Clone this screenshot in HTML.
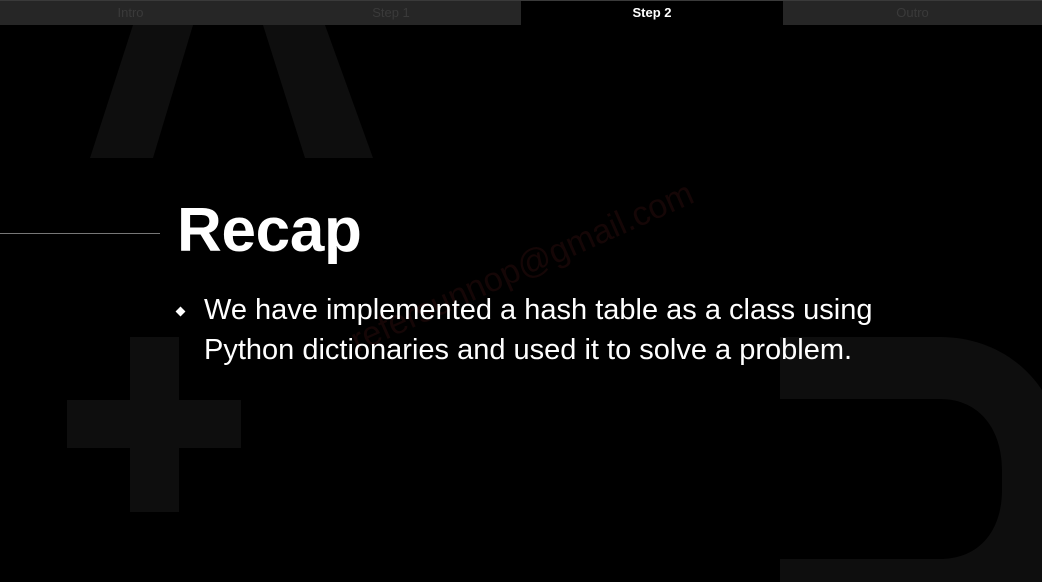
<!DOCTYPE html>
<html><head><style>
html,body{margin:0;padding:0;background:#000;width:1042px;height:582px;overflow:hidden;position:relative;font-family:"Liberation Sans",sans-serif}
.tabs{position:absolute;top:0;left:0;width:1042px;height:25px;background:#262626;border-top:1px solid #3a3a3a;box-sizing:border-box}
.tab{position:absolute;top:0;height:25px;line-height:24px;text-align:center;font-size:13px;color:#3a3a3a}
.tab.act{background:#000;color:#fff;font-weight:bold}
.line{position:absolute;left:0;top:233px;width:160px;height:1px;background:#777}
h1{position:absolute;left:177px;top:195px;margin:0;font-size:62px;font-weight:bold;color:#fff;letter-spacing:-0.3px}
.bul{position:absolute;left:204px;top:290px;width:760px;font-size:29px;line-height:40px;color:#fff}
.dia{position:absolute;left:177px;top:308px;width:7px;height:7px;background:#fff;transform:rotate(45deg)}
.wm{position:absolute;left:345px;top:325px;font-size:34px;color:rgba(70,20,20,0.3);transform:rotate(-24deg);transform-origin:left top}
</style></head><body>
<svg width="1042" height="582" style="position:absolute;left:0;top:0">
<g fill="#0e0e0e">
<polygon points="133,25 193,25 153,158 90,158"/>
<polygon points="263,25 325,25 373,158 305,158"/>
<rect x="130" y="337" width="49" height="175"/>
<rect x="67" y="400" width="174" height="48"/>
<path fill-rule="evenodd" d="M780 337 L940 337 C1010 337 1060 390 1060 450 L1060 582 L780 582 Z M780 399 L940 399 C980 399 1002 430 1002 470 L1002 490 C1002 530 980 559 940 559 L780 559 Z"/>
</g>
</svg>
<div class="tabs">
<div class="tab" style="left:0;width:261px">Intro</div>
<div class="tab" style="left:261px;width:260px">Step 1</div>
<div class="tab act" style="left:521px;width:262px">Step 2</div>
<div class="tab" style="left:783px;width:259px">Outro</div>
</div>
<div class="line"></div>
<div class="wm">refersunnop@gmail.com</div>
<h1>Recap</h1>
<div class="dia"></div>
<div class="bul">We have implemented a hash table as a class using Python dictionaries and used it to solve a problem.</div>
</body></html>
